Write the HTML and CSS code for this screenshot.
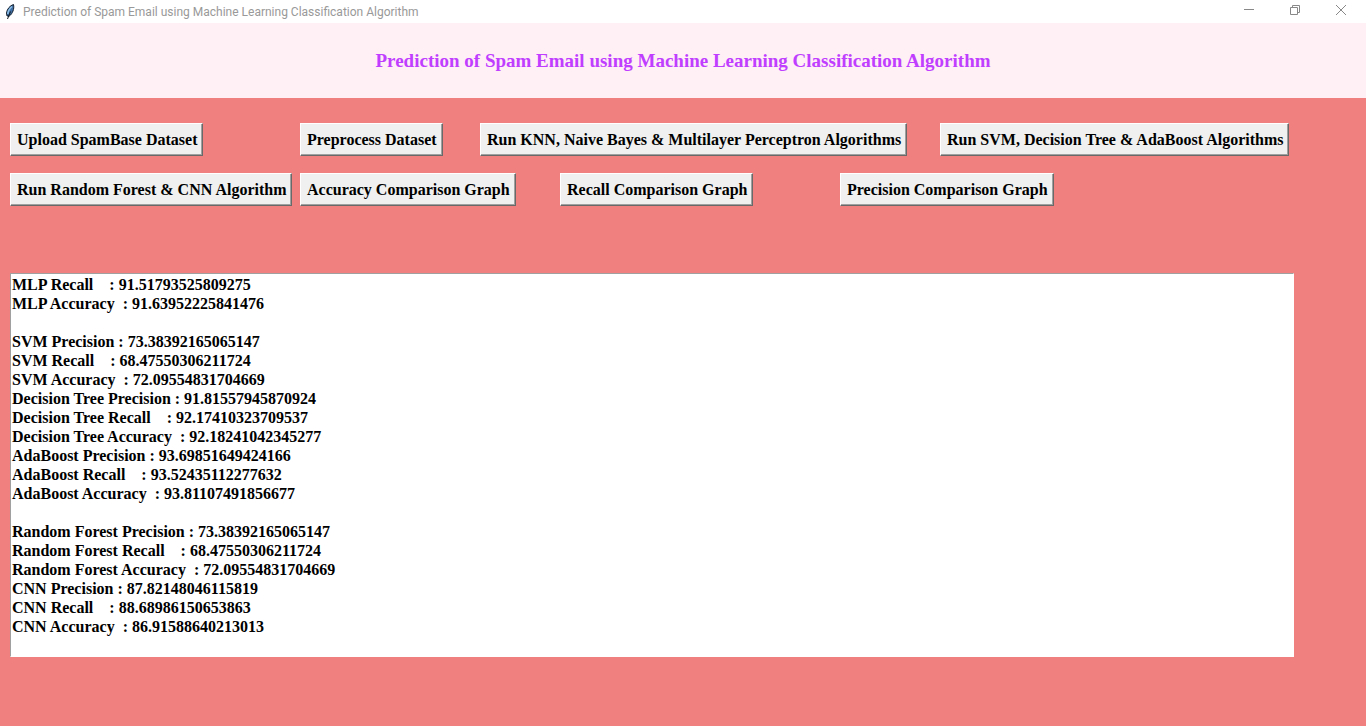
FILE: index.html
```html
<!DOCTYPE html>
<html lang="en">
<head>
<meta charset="utf-8">
<meta name="viewport" content="width=device-width, initial-scale=1">
<title>Prediction of Spam Email using Machine Learning Classification Algorithm</title>
<link rel="stylesheet" href="styles.css">
</head>
<body>
<div class="titlebar">
  <svg class="feather" viewBox="0 0 12 18" aria-hidden="true">
    <path d="M9.5 1.5C6 2.5 3 6 2.5 10L3 13L5.5 13C8.5 10.5 10.5 6 9.5 1.5Z" fill="#3f6fa5" stroke="#14202e"/>
    <path d="M8 3.5C5.5 5.5 4 8.5 3.8 11" fill="none" stroke="#8fc0e8" stroke-width="1.6"/>
    <path d="M6.5 8.5L3.5 16" fill="none" stroke="#101820"/>
  </svg>
  <span class="caption">Prediction of Spam Email using Machine Learning Classification Algorithm</span>
  <div class="controls">
    <button class="control" type="button" aria-label="Minimize"><svg viewBox="0 0 12 12"><path d="M1 5.5H11"/></svg></button>
    <button class="control" type="button" aria-label="Restore"><svg viewBox="0 0 12 12"><path d="M1.5 3.5H8.5V10.5H1.5ZM3.5 3.5V1.5H10.5V8.5H8.5"/></svg></button>
    <button class="control" type="button" aria-label="Close"><svg viewBox="0 0 12 12"><path d="M1 1L11 11M11 1L1 11"/></svg></button>
  </div>
</div>
<header class="banner"><h1 class="heading">Prediction of Spam Email using Machine Learning Classification Algorithm</h1></header>
<main class="content">
  <div class="toolbar">
    <div class="row row-models">
      <button class="action" type="button">Upload SpamBase Dataset</button>
      <button class="action" type="button">Preprocess Dataset</button>
      <button class="action" type="button">Run KNN, Naive Bayes &amp; Multilayer Perceptron Algorithms</button>
      <button class="action" type="button">Run SVM, Decision Tree &amp; AdaBoost Algorithms</button>
    </div>
    <div class="row row-graphs">
      <button class="action" type="button">Run Random Forest &amp; CNN Algorithm</button>
      <button class="action" type="button">Accuracy Comparison Graph</button>
      <button class="action" type="button">Recall Comparison Graph</button>
      <button class="action" type="button">Precision Comparison Graph</button>
    </div>
  </div>
  <textarea class="output" rows="20" aria-label="Results" spellcheck="false">MLP Recall    : 91.51793525809275
MLP Accuracy  : 91.63952225841476

SVM Precision : 73.38392165065147
SVM Recall    : 68.47550306211724
SVM Accuracy  : 72.09554831704669
Decision Tree Precision : 91.81557945870924
Decision Tree Recall    : 92.17410323709537
Decision Tree Accuracy  : 92.18241042345277
AdaBoost Precision : 93.69851649424166
AdaBoost Recall    : 93.52435112277632
AdaBoost Accuracy  : 93.81107491856677

Random Forest Precision : 73.38392165065147
Random Forest Recall    : 68.47550306211724
Random Forest Accuracy  : 72.09554831704669
CNN Precision : 87.82148046115819
CNN Recall    : 88.68986150653863
CNN Accuracy  : 86.91588640213013
</textarea>
</main>
</body>
</html>
```
FILE: styles.css
```css
* { box-sizing: border-box; }

body {
  margin: 0;
  min-height: 100vh;
  display: flex;
  flex-direction: column;
  background: #f08080;
  color: #000;
  font-family: "Liberation Serif", "Times New Roman", serif;
}

.titlebar {
  display: flex;
  align-items: center;
  height: 23px;
  padding-left: 4px;
  background: #fff;
  color: #999;
  font: 12px Roboto, sans-serif;
}

.feather { width: 12px; height: 18px; margin-right: 7px; }
.caption { flex: 1; white-space: nowrap; }
.controls { display: flex; padding-right: 2px; }

.control {
  display: flex;
  align-items: center;
  justify-content: center;
  width: 46px;
  height: 20px;
  padding: 0;
  border: 0;
  background: none;
}

.control svg {
  width: 12px;
  height: 12px;
  fill: none;
  stroke: #888;
}

.controls { align-self: flex-start; }

.banner {
  display: flex;
  align-items: center;
  justify-content: center;
  height: 75px;
  background: #fff0f5;
}

.heading {
  margin: 0;
  color: #bf3eff;
  font-size: 19px;
  line-height: 24px;
}

.content { padding: 25px 72px 0 10px; }

.toolbar {
  display: grid;
  gap: 17px;
  margin-bottom: 67px;
}

.row { display: grid; justify-items: start; }
.row-models { grid-template-columns: 290px 180px 460px auto; }
.row-graphs { grid-template-columns: 290px 260px 280px auto; }

.action {
  height: 33px;
  padding: 0 5px 0 6px;
  border: 1px solid;
  border-color: #fff #696969 #696969 #fff;
  box-shadow: inset -1px -1px #a0a0a0;
  background: #f0f0f0;
  color: #000;
  font: bold 16px "Liberation Serif", "Times New Roman", serif;
  white-space: nowrap;
}

.output {
  display: block;
  width: 100%;
  padding: 1px;
  border: 1px solid;
  border-color: #a0a0a0 #fff #fff #a0a0a0;
  border-radius: 0;
  outline: 0;
  resize: none;
  overflow: hidden;
  background: #fff;
  color: #000;
  font: bold 16px/19px "Liberation Serif", "Times New Roman", serif;
}
```
